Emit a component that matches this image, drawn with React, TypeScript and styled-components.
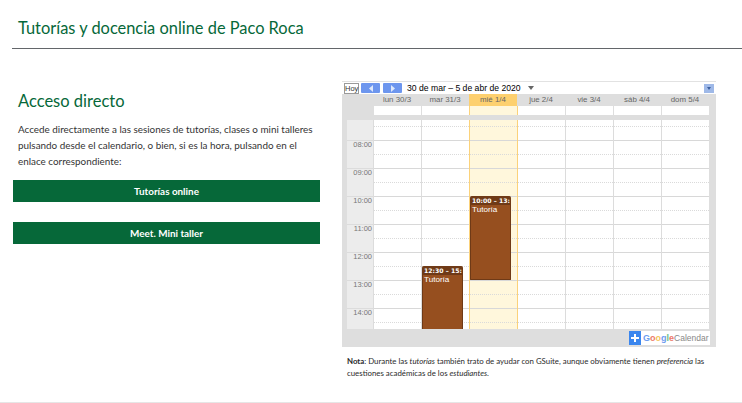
import React from "react";
import styled, { createGlobalStyle } from "styled-components";

const Global = createGlobalStyle`
  html, body { margin: 0; padding: 0; background: #fff; }
  body { width: 742px; height: 403px; overflow: hidden; font-family: Lato, "Open Sans", sans-serif; }
`;
const Page = styled.div`display: flex; flex-direction: column; height: 403px; box-sizing: border-box; border-bottom: 1px solid #e6e6e6;`;
const Header = styled.header`margin-left: 12px; height: 49px; box-sizing: border-box; border-bottom: 1px solid #63666a; padding: 17px 0 0 6px;`;
const Title = styled.h1`margin: 0; font: 400 16.4px/21px Lato, sans-serif; color: #066839;`;
const Main = styled.main`display: flex; padding: 32px 0 0 13px; gap: 22px;`;
const Left = styled.section`width: 307px;`;
const Heading = styled.h2`margin: 9px 0 0 5px; font: 400 16.5px/22px Lato, sans-serif; color: #066839;`;
const Intro = styled.p`margin: 9px 0 11px 5px; font: 400 9.9px/16px Lato, sans-serif; color: #333;`;
const Action = styled.a`display: block; height: 22px; margin-bottom: 20px; background: #066839; color: #fff; text-align: center; font: 700 9.9px/22px Lato, sans-serif;`;
const Right = styled.section`width: 374px;`;
const Calendar = styled.div`width: 374px; height: 266px; box-sizing: border-box; border-top: 1px solid #e2e2e2; display: flex; flex-direction: column; font-family: "Liberation Sans", Arial, sans-serif;`;
const Toolbar = styled.div`height: 12px; display: flex; align-items: center; padding: 0 2px 0 2px; background: #fff;`;
const Today = styled.span`width: 13px; height: 9px; border: 1px solid #9a9a9a; font-size: 7.5px; line-height: 9px; text-align: center; color: #333; margin-right: 2px;`;
const NavButton = styled.span`width: 19px; height: 10px; background: #6d96ee; border-radius: 1px; margin-right: 3px; display: flex; align-items: center; justify-content: center;`;
const DateRange = styled.span`margin-left: 2px; font-size: 8.65px; line-height: 12px; color: #000; white-space: nowrap;`;
const Caret = styled.span`width: 0; height: 0; margin-left: 7px; border: 3.5px solid transparent; border-top: 4px solid #666; border-bottom: 0;`;
const Menu = styled.span`margin-left: auto; width: 10px; height: 9px; background: #9fb9e8; display: flex; align-items: center; justify-content: center;`;
const MenuCaret = styled.span`width: 0; height: 0; border: 2.5px solid transparent; border-top: 3px solid #3c5f9e; border-bottom: 0;`;
const Frame = styled.div`flex: 1; background: #dedede; display: flex; flex-direction: column;`;
const Days = styled.div`display: flex; padding-left: 31px; height: 12px;`;
const DayName = styled.div<{ $today?: boolean }>`width: 48px; text-align: center; font-size: 7.9px; line-height: 12px; color: #666; background: ${(p) => (p.$today ? "#fdd06f" : "transparent")};`;
const AllDayRow = styled.div`display: flex; padding-left: 31px; height: 9px; margin-bottom: 5px;`;
const AllDayCell = styled.div<{ $today?: boolean; $edge?: boolean }>`width: 48px; box-sizing: border-box; border-left: 1px solid ${(p) => (p.$today || p.$edge ? "#fbd27a" : "#dedede")}; background: ${(p) => (p.$today ? "#fff7dc" : "#fff")};`;
const Grid = styled.div`display: flex; height: 209px; overflow: hidden; margin-left: 5px; width: 362px;`;
const TimeColumn = styled.div`width: 26px; background: #ececec; flex: none;`;
const TimeLead = styled.div`height: 20px;`;
const TimeCell = styled.div`height: 28px; box-sizing: border-box; border-top: 1px solid #dcdcdc; font-size: 7.5px; line-height: 7px; text-align: right; color: #777; padding-right: 1px;`;
const DayColumn = styled.div<{ $today?: boolean; $edge?: boolean }>`width: 48px; flex: none; box-sizing: border-box; position: relative; border-left: 1px solid ${(p) => (p.$today || p.$edge ? "#fbd27a" : "#dcdcdc")}; background: ${(p) => (p.$today ? "#fff7dc" : "#fff")};`;
const LeadSlot = styled.div`height: 20px; box-sizing: border-box; padding-top: 6px;`;
const HourSlot = styled.div`height: 28px; box-sizing: border-box; padding-top: 13px; border-top: 1px solid #d8d8d8;`;
const Dots = styled.div`border-top: 1px dotted #dadada;`;
const Event = styled.div<{ $top: number; $height: number }>`position: absolute; left: 0; top: ${(p) => p.$top}px; width: 41px; height: ${(p) => p.$height}px; box-sizing: border-box; background: #964f1f; border: 1px solid #6f3a17; border-top: 0; border-radius: 2px 2px 1px 1px; color: #fff; overflow: hidden;`;
const EventTime = styled.div`height: 9px; background: #6f3a17; font: 700 6.15px/9px "DejaVu Sans", sans-serif; white-space: nowrap; padding-left: 1px;`;
const EventName = styled.div`font-size: 8.1px; line-height: 10px; padding-left: 1px; color: #fff;`;
const FrameFoot = styled.div`flex: 1; display: flex; justify-content: flex-end; align-items: center; padding-right: 6px;`;
const Brand = styled.div`height: 14px; width: 81px; background: #fff; display: flex; align-items: center; font-size: 8.5px; color: #888; white-space: nowrap;`;
const Plus = styled.span`width: 12px; height: 14px; background: #3b86ee; display: flex; align-items: center; justify-content: center; margin-right: 2px;`;
const Letter = styled.span<{ $c: string }>`color: ${(p) => p.$c}; font-weight: 700; font-size: 9px;`;
const Note = styled.p`margin: 8px 0 0 5px; font: 400 7.85px/12px Lato, sans-serif; color: #2a2a2a; width: 365px;`;

const days = ["lun 30/3", "mar 31/3", "mié 1/4", "jue 2/4", "vie 3/4", "sáb 4/4", "dom 5/4"];
const hours = ["08:00", "09:00", "10:00", "11:00", "12:00", "13:00", "14:00"];

const Tri = ({ d }: { d: string }) => (
  <svg width="6" height="7" viewBox="0 0 6 7"><path d={d} fill="#dfe9fb" /></svg>
);

export default function App() {
  return (
    <Page>
      <Global />
      <Header><Title>Tutorías y docencia online de Paco Roca</Title></Header>
      <Main>
        <Left>
          <Heading>Acceso directo</Heading>
          <Intro>
            Accede directamente a las sesiones de tutorías, clases o mini talleres pulsando desde el calendario, o bien, si es la hora, pulsando en el enlace correspondiente:
          </Intro>
          <Action>Tutorías online</Action>
          <Action>Meet. Mini taller</Action>
        </Left>
        <Right>
          <Calendar>
            <Toolbar>
              <Today>Hoy</Today>
              <NavButton><Tri d="M5 0 1 3.5 5 7z" /></NavButton>
              <NavButton><Tri d="M1 0 5 3.5 1 7z" /></NavButton>
              <DateRange>30 de mar – 5 de abr de 2020</DateRange>
              <Caret />
              <Menu><MenuCaret /></Menu>
            </Toolbar>
            <Frame>
              <Days>{days.map((d, i) => <DayName key={d} $today={i === 2}>{d}</DayName>)}</Days>
              <AllDayRow>{days.map((d, i) => <AllDayCell key={d} $today={i === 2} $edge={i === 3} />)}</AllDayRow>
              <Grid>
                <TimeColumn>
                  <TimeLead />
                  {hours.map((h) => <TimeCell key={h}>{h}</TimeCell>)}
                </TimeColumn>
                {days.map((d, i) => (
                  <DayColumn key={d} $today={i === 2} $edge={i === 3}>
                    <LeadSlot><Dots /></LeadSlot>
                    {hours.map((h) => <HourSlot key={h}><Dots /></HourSlot>)}
                    {i === 1 && (
                      <Event $top={146} $height={70}>
                        <EventTime>12:30 – 15:</EventTime>
                        <EventName>Tutoría</EventName>
                      </Event>
                    )}
                    {i === 2 && (
                      <Event $top={76} $height={84}>
                        <EventTime>10:00 – 13:</EventTime>
                        <EventName>Tutoría</EventName>
                      </Event>
                    )}
                  </DayColumn>
                ))}
              </Grid>
              <FrameFoot>
                <Brand>
                  <Plus>
                    <svg width="8" height="8" viewBox="0 0 8 8"><path d="M3 0h2v3h3v2H5v3H3V5H0V3h3z" fill="#fff" /></svg>
                  </Plus>
                  <Letter $c="#6d9cf0">G</Letter><Letter $c="#ec7a6c">o</Letter><Letter $c="#f5c65a">o</Letter><Letter $c="#6d9cf0">g</Letter><Letter $c="#6cc08b">l</Letter><Letter $c="#ec7a6c">e</Letter>
                  Calendar
                </Brand>
              </FrameFoot>
            </Frame>
          </Calendar>
          <Note>
            <strong>Nota</strong>: Durante las <em>tutorías</em> también trato de ayudar con GSuite, aunque obviamente tienen <em>preferencia</em> las cuestiones académicas de los <em>estudiantes</em>.
          </Note>
        </Right>
      </Main>
    </Page>
  );
}
